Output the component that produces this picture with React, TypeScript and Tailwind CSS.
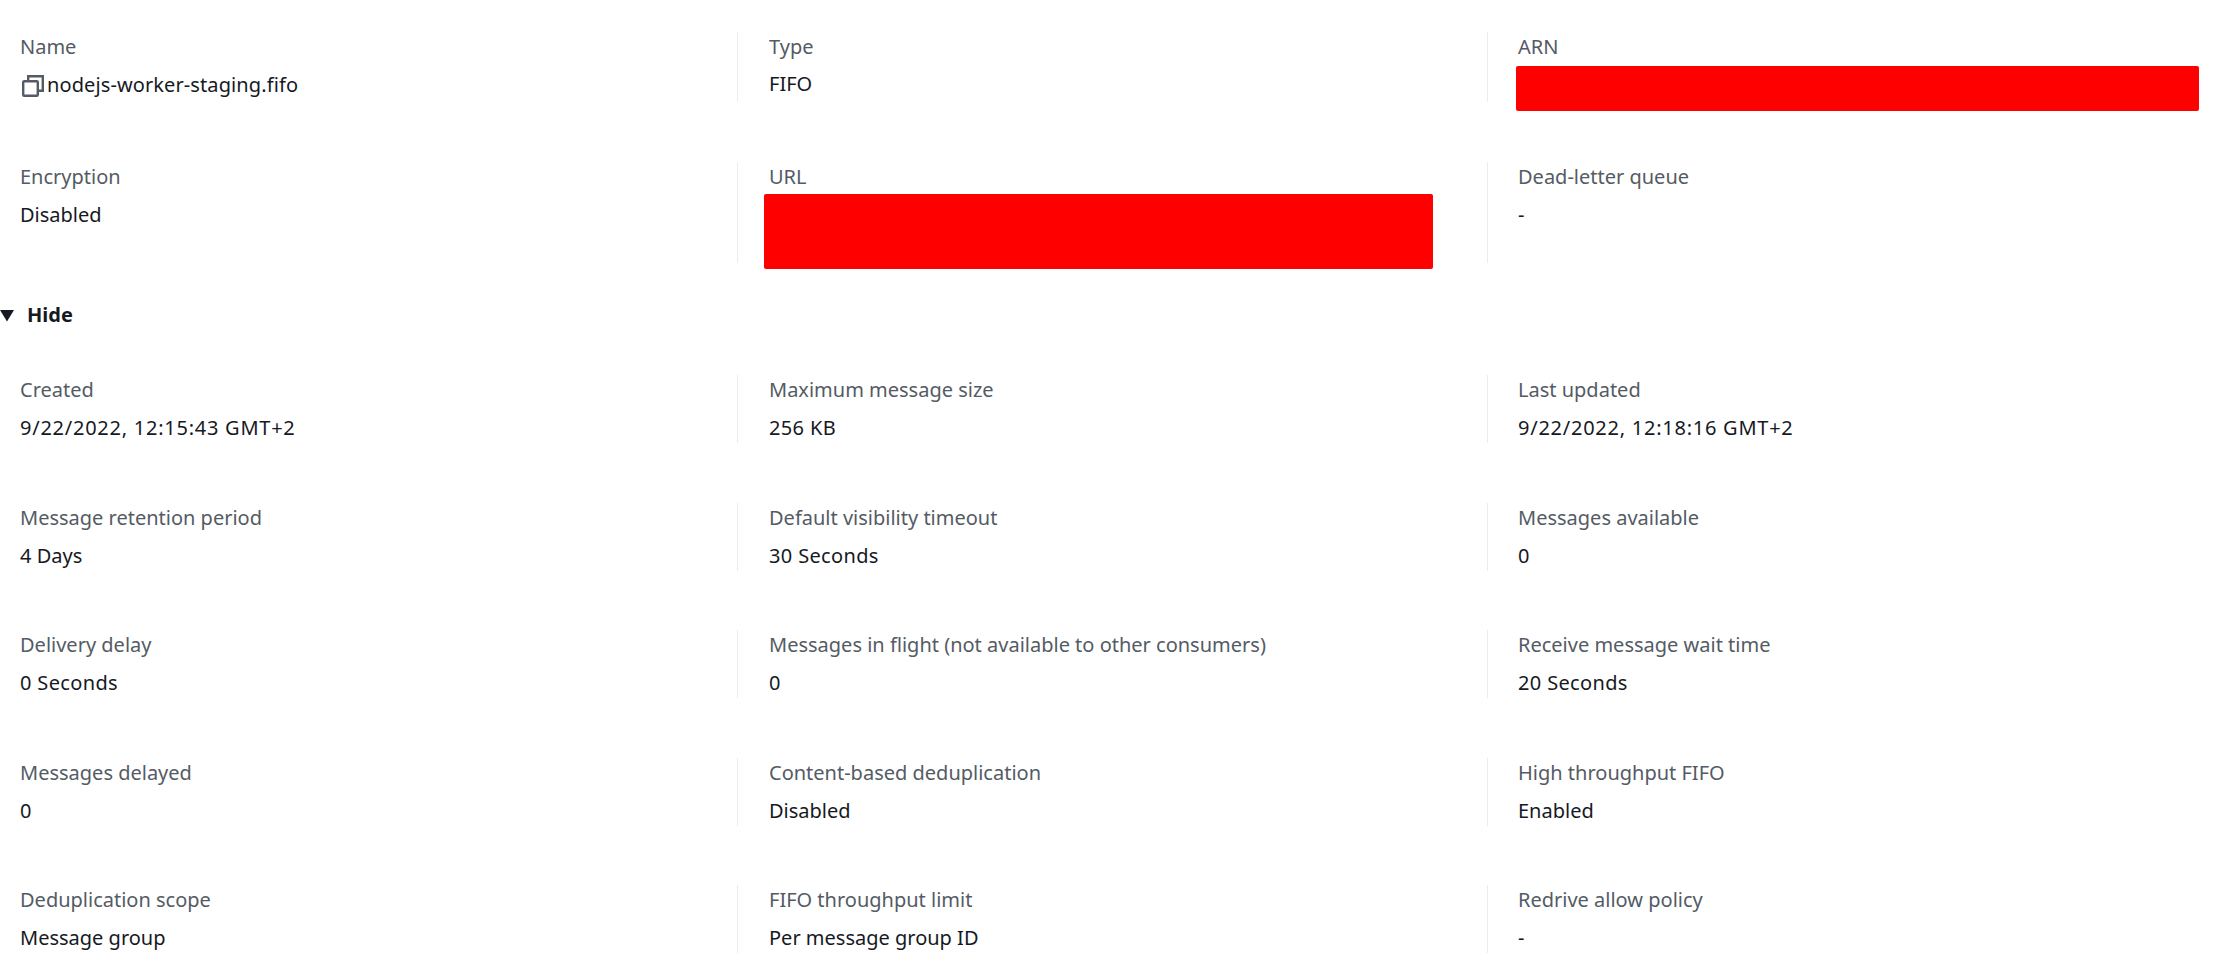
const font = "font-['Noto_Sans','Open_Sans',sans-serif]";

type Item = { label: string; value?: string; copy?: boolean; spacing?: string; tight?: boolean };

const date = "tracking-[0.75px]";
const seconds = "tracking-[0.35px]";

const top: Item[][] = [
  [
    { label: "Name", value: "nodejs-worker-staging.fifo", copy: true, spacing: "tracking-[0.1px]" },
    { label: "Type", value: "FIFO", tight: true },
    { label: "ARN" },
  ],
  [
    { label: "Encryption", value: "Disabled" },
    { label: "URL" },
    { label: "Dead-letter queue", value: "-" },
  ],
];

const details: Item[][] = [
  [
    { label: "Created", value: "9/22/2022, 12:15:43 GMT+2", spacing: date },
    { label: "Maximum message size", value: "256 KB", spacing: seconds },
    { label: "Last updated", value: "9/22/2022, 12:18:16 GMT+2", spacing: date },
  ],
  [
    { label: "Message retention period", value: "4 Days" },
    { label: "Default visibility timeout", value: "30 Seconds", spacing: seconds },
    { label: "Messages available", value: "0" },
  ],
  [
    { label: "Delivery delay", value: "0 Seconds", spacing: seconds },
    { label: "Messages in flight (not available to other consumers)", value: "0" },
    { label: "Receive message wait time", value: "20 Seconds", spacing: seconds },
  ],
  [
    { label: "Messages delayed", value: "0" },
    { label: "Content-based deduplication", value: "Disabled" },
    { label: "High throughput FIFO", value: "Enabled" },
  ],
  [
    { label: "Deduplication scope", value: "Message group" },
    { label: "FIFO throughput limit", value: "Per message group ID" },
    { label: "Redrive allow policy", value: "-" },
  ],
];

function CopyIcon() {
  return (
    <svg width="22" height="22" viewBox="0 0 22 22" fill="none" stroke="#545b64" strokeWidth="2.4" className="ml-[2px] mr-[3px] mt-[2px] shrink-0">
      <rect x="1.2" y="6.2" width="14.6" height="14.6" rx="1" />
      <path d="M6.2 6V1.2h14.6v14.6H16" />
    </svg>
  );
}

const cellPadding = ["pl-5", "pl-[31px] border-l border-[#eaeded]", "pl-[30px] border-l border-[#eaeded]"];

function Cell({ item, index }: { item: Item; index: number }) {
  return (
    <div className={`pt-px ${cellPadding[index]}`}>
      <div className="text-[20px] leading-[28px] text-[#545b64] whitespace-nowrap">{item.label}</div>
      {item.value && (
        <div
          className={`flex items-center text-[20px] leading-[28px] text-[#16191f] whitespace-nowrap ${
            item.tight ? "mt-[9px]" : "mt-[10px]"
          } ${item.spacing ?? ""}`}
        >
          {item.copy && <CopyIcon />}
          {item.value}
        </div>
      )}
    </div>
  );
}

function Row({ items, className }: { items: Item[]; className: string }) {
  return (
    <div className={`grid grid-cols-[737px_750px_733px] ${className}`}>
      {items.map((item, i) => (
        <Cell key={item.label} item={item} index={i} />
      ))}
    </div>
  );
}

export default function App() {
  return (
    <div className={`relative h-[970px] w-[2220px] overflow-hidden bg-white pt-8 ${font}`}>
      <Row items={top[0]} className="h-[70px]" />
      <Row items={top[1]} className="mt-[60px] h-[101px]" />
      <div className="mt-[38px] flex h-[28px] items-center text-[20px] font-bold text-[#16191f]">
        <svg width="14" height="13" viewBox="0 0 14 13" className="mr-[13px] shrink-0">
          <path d="M0 1h14L7 12.5z" fill="#16191f" />
        </svg>
        Hide
      </div>
      <div className="mt-[46px] flex flex-col gap-[59.5px]">
        {details.map((row) => (
          <Row key={row[0].label} items={row} className="h-[68px]" />
        ))}
      </div>
      <div className="absolute left-[1516px] top-[66px] h-[45px] w-[683px] rounded-[2px] bg-[#ff0000]" />
      <div className="absolute left-[764px] top-[194px] h-[75px] w-[669px] rounded-[2px] bg-[#ff0000]" />
    </div>
  );
}
